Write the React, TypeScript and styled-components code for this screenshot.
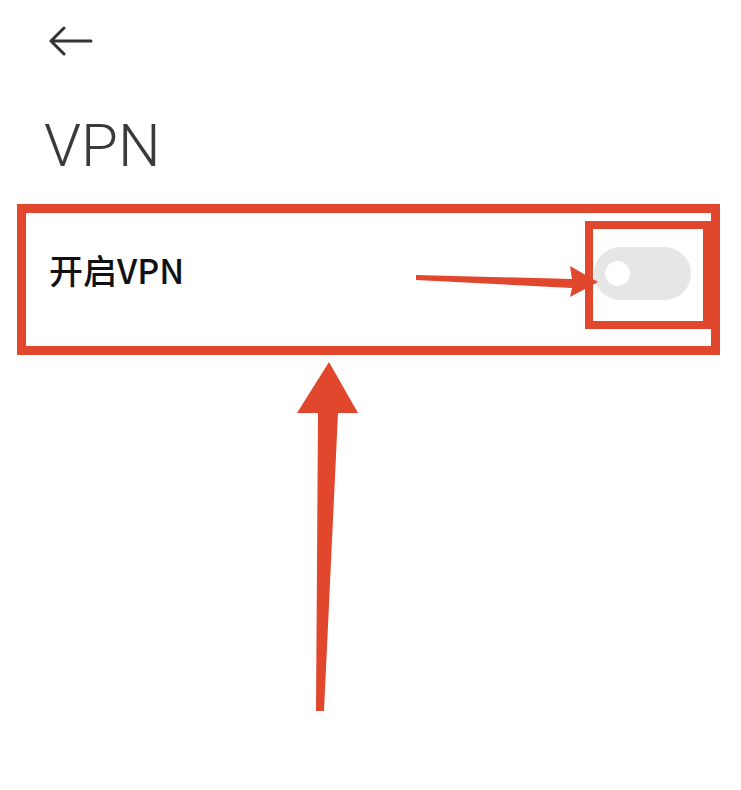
import styled, { createGlobalStyle } from "styled-components";

const RED = "#e1472c";

const GlobalStyle = createGlobalStyle`
  html, body {
    margin: 0;
    padding: 0;
    background: #ffffff;
  }
  body {
    font-family: Roboto, "Noto Sans", "Noto Sans CJK SC", sans-serif;
  }
`;

const Page = styled.div`
  position: relative;
  width: 741px;
  height: 790px;
  background: #ffffff;
  overflow: hidden;
`;

const Header = styled.div`
  height: 82px;
  display: flex;
  align-items: center;
  padding-left: 49px;
`;

const BackButton = styled.button`
  display: flex;
  align-items: center;
  justify-content: center;
  width: 44px;
  height: 30px;
  padding: 0;
  border: none;
  background: none;
  color: #333333;
`;

const Title = styled.h1`
  margin: 0;
  padding: 34px 0 0 44px;
  height: 122px;
  box-sizing: border-box;
  font-family: Roboto, "Noto Sans", sans-serif;
  font-weight: 300;
  font-size: 60px;
  line-height: 60px;
  color: #3a3a3a;
`;

const Row = styled.div`
  position: relative;
  margin: 0 21px 0 17px;
  height: 151px;
  box-sizing: border-box;
  border: 9px solid ${RED};
  display: flex;
  align-items: center;
  justify-content: space-between;
  padding: 0 20px 0 23px;
`;

const RowLabel = styled.span`
  font-family: "Noto Sans CJK SC", "Noto Sans", sans-serif;
  font-weight: 500;
  font-size: 34px;
  color: #111111;
  margin-top: -20px;
`;

const Toggle = styled.div<{ on?: boolean }>`
  width: 97px;
  height: 53px;
  border-radius: 27px;
  background: ${(p) => (p.on ? "#2f7cf6" : "#e6e6e6")};
  display: flex;
  align-items: center;
  justify-content: ${(p) => (p.on ? "flex-end" : "flex-start")};
  padding: 0 11px;
  box-sizing: border-box;
  margin-top: -12px;
`;

const Knob = styled.span`
  width: 25px;
  height: 25px;
  border-radius: 50%;
  background: #ffffff;
`;

const ToggleFrame = styled.span`
  position: absolute;
  left: 559px;
  top: 8px;
  width: 126px;
  height: 108px;
  box-sizing: border-box;
  border: 8px solid ${RED};
  pointer-events: none;
`;

const Marks = styled.svg`
  position: absolute;
  left: 0;
  top: 0;
  pointer-events: none;
`;

export default function App() {
  return (
    <Page>
      <GlobalStyle />
      <Header>
        <BackButton aria-label="back">
          <svg width="44" height="30" viewBox="0 0 44 30" fill="none">
            <path
              d="M42 15H3M15 2L2 15l13 13"
              stroke="currentColor"
              strokeWidth="3"
              strokeLinecap="round"
              strokeLinejoin="round"
            />
          </svg>
        </BackButton>
      </Header>
      <Title>VPN</Title>
      <Row>
        <RowLabel>开启VPN</RowLabel>
        <Toggle>
          <Knob />
        </Toggle>
        <ToggleFrame />
      </Row>

      <Marks width="741" height="790" viewBox="0 0 741 790">
        {/* pointer to the switch */}
        <polygon
          points="416,275 572,279 570,266 598,282 570,297 572,288 416,280"
          fill={RED}
        />
        {/* pointer up to the row */}
        <polygon
          points="329,362 297,413 318,413 316,711 324,711 338,413 358,413"
          fill={RED}
        />
      </Marks>
    </Page>
  );
}
